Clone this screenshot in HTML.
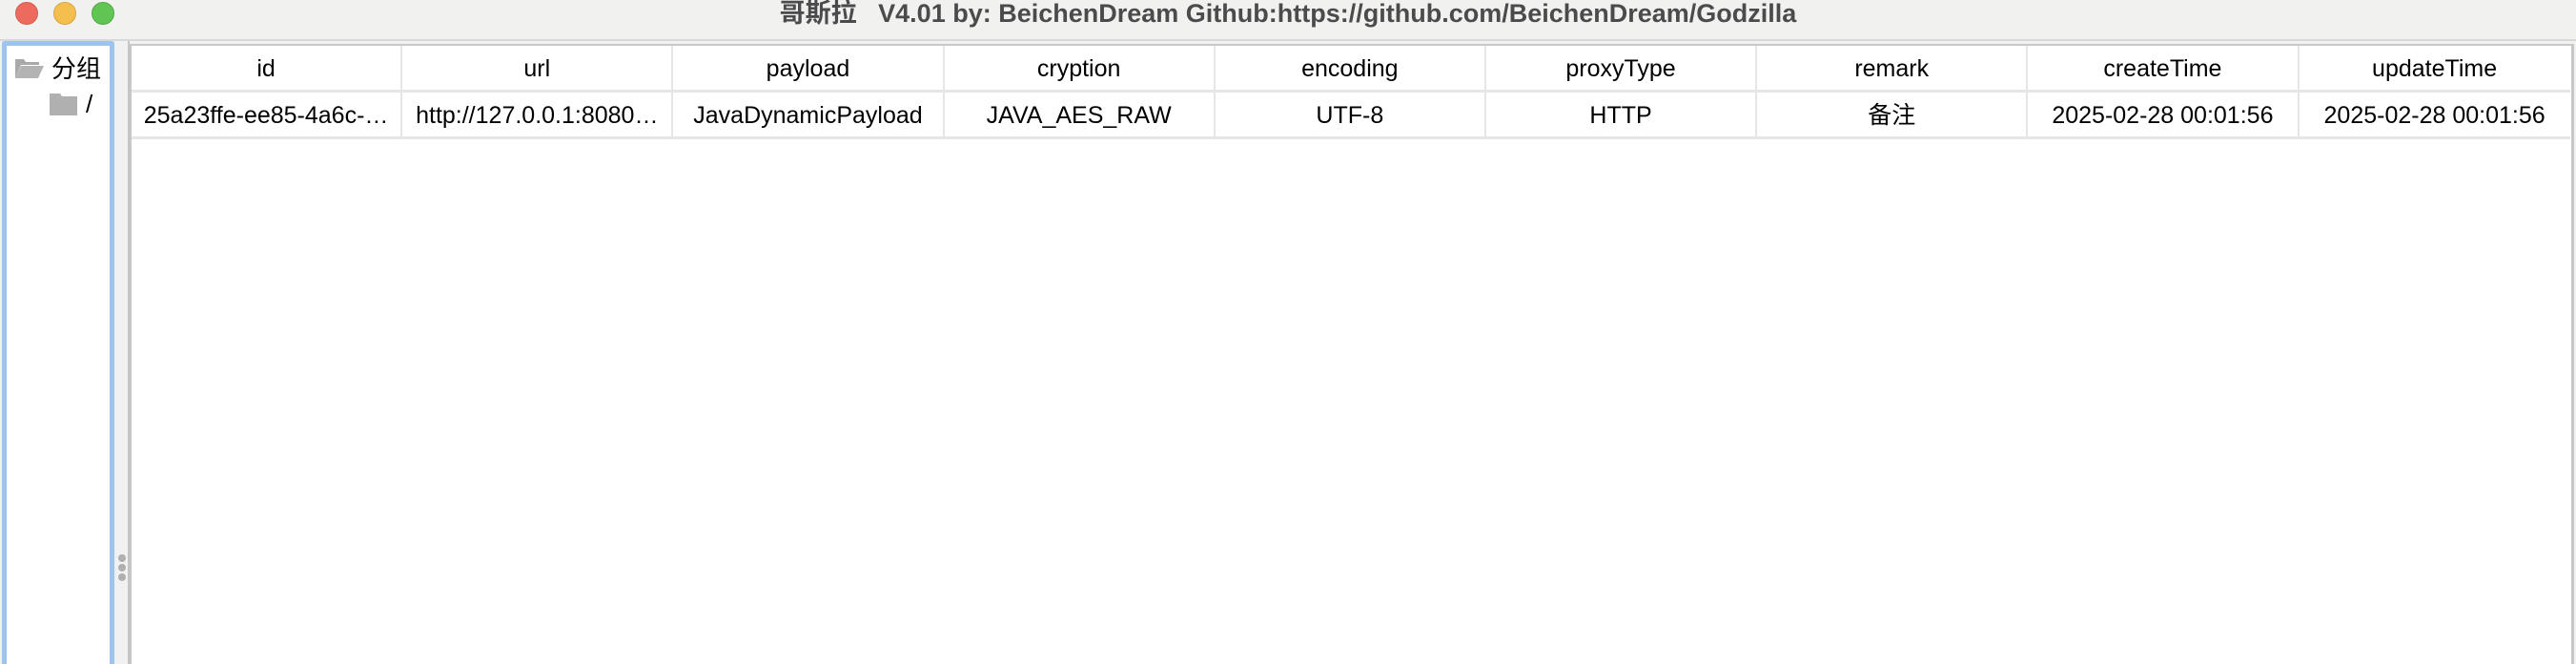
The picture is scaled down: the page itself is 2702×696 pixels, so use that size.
<!DOCTYPE html>
<html style="overflow:hidden;width:2702px;height:696px"><head><meta charset="utf-8"><style>
*{margin:0;padding:0;box-sizing:border-box}
body{width:2702px;height:696px;background:#f1f1f0;position:relative;overflow:hidden;font-family:"Liberation Sans","Noto Sans CJK SC",sans-serif}
.tl{position:absolute;top:2px;width:24px;height:24px;border-radius:50%}
.title{position:absolute;top:0;left:0;width:2702px;text-align:center;font-weight:bold;font-size:27px;color:#4b4b4b;line-height:28px}
.sep{position:absolute;left:0;top:41px;width:2702px;height:2px;background:#d8d8d8}
.left{position:absolute;left:2px;top:43px;width:118px;height:653px;border:5px solid #9cc4ee;border-bottom:none;border-radius:3px 3px 0 0;background:#fff}
.strip{position:absolute;left:120px;top:43px;width:16px;height:653px;background:#f1f1f1;border-right:2px solid #c4c4c4}
.dot{position:absolute;left:124px;width:8px;height:8px;border-radius:50%;background:#b0b0b0}
.tbl{position:absolute;left:136px;top:46px;width:2564px;height:650px;background:#fff;border:2px solid #c8c8c8;border-right-width:3px;border-bottom:none}
.row{position:absolute;left:0;height:49px;display:flex}
.c{width:284.2px;text-align:center;font-size:25px;color:#000;line-height:48px;border-right:2px solid #e6e6e6;border-bottom:3px solid #e6e6e6;white-space:nowrap;overflow:hidden}
</style></head><body>
<div class="tl" style="left:16px;background:#ed6a5e;border:1px solid #d45a4f"></div>
<div class="tl" style="left:56px;background:#f5bf4f;border:1px solid #d9a33f"></div>
<div class="tl" style="left:96px;background:#61c554;border:1px solid #50a845"></div>
<div class="title">哥斯拉&nbsp;&nbsp; V4.01 by: BeichenDream Github:https://github.com/BeichenDream/Godzilla</div>
<div class="sep"></div>
<div class="left">
<svg style="position:absolute;left:9px;top:12px" width="30" height="24" viewBox="0 0 30 24"><path d="M0 2h9l2 3h14v3H6L0 22z" fill="#a9a9a9"/><path d="M6 9h24l-6 13H0z" fill="#b3b3b3"/></svg>
<div style="position:absolute;left:47px;top:6px;font-size:26px;line-height:36px">分组</div>
<svg style="position:absolute;left:45px;top:50px" width="29" height="23" viewBox="0 0 29 23"><path d="M0 0h11l2 3h16v20H0z" fill="#b0b0b0"/></svg>
<div style="position:absolute;left:83px;top:43px;font-size:26px;line-height:36px">/</div>
</div>
<div class="strip"></div>
<div class="dot" style="top:581px"></div><div class="dot" style="top:591px"></div><div class="dot" style="top:601px"></div>
<div class="tbl">
<div class="row" style="top:0"><div class="c">id</div><div class="c">url</div><div class="c">payload</div><div class="c">cryption</div><div class="c">encoding</div><div class="c">proxyType</div><div class="c">remark</div><div class="c">createTime</div><div class="c" style="border-right:none">updateTime</div></div>
<div class="row" style="top:49px"><div class="c">25a23ffe-ee85-4a6c-…</div><div class="c">http://127.0.0.1:8080…</div><div class="c">JavaDynamicPayload</div><div class="c">JAVA_AES_RAW</div><div class="c">UTF-8</div><div class="c">HTTP</div><div class="c">备注</div><div class="c">2025-02-28 00:01:56</div><div class="c" style="border-right:none">2025-02-28 00:01:56</div></div>
</div>
</body></html>
